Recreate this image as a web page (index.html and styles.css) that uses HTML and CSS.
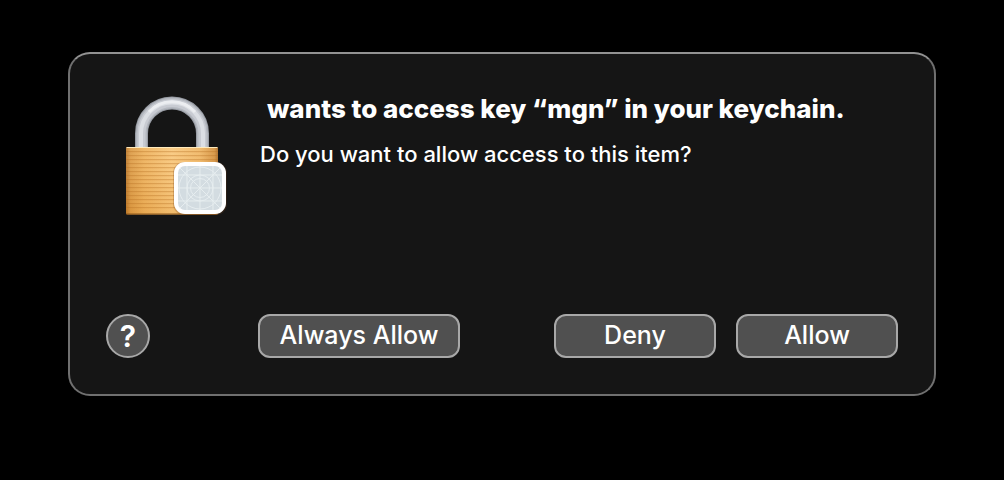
FILE: index.html
```html
<!DOCTYPE html>
<html lang="en">
<head>
<meta charset="utf-8">
<meta name="viewport" content="width=device-width, initial-scale=1">
<title>Keychain Access</title>
<link rel="stylesheet" href="styles.css">
</head>
<body>
<main class="dialog" role="alertdialog" aria-labelledby="title" aria-describedby="question">
  <div class="message">
    <svg class="lock" viewBox="124 90 104 130" aria-hidden="true">
      <defs>
        <linearGradient id="brass" x1="0" x2="1" y1="0" y2="0">
          <stop offset="0" stop-color="#b9772b"/>
          <stop offset=".05" stop-color="#dc9b45"/>
          <stop offset=".2" stop-color="#eeb25c"/>
          <stop offset=".5" stop-color="#f9c87c"/>
          <stop offset=".8" stop-color="#f0b765"/>
          <stop offset=".96" stop-color="#d5923e"/>
          <stop offset="1" stop-color="#ab6b24"/>
        </linearGradient>
        <linearGradient id="shade" x1="0" x2="0" y1="0" y2="1">
          <stop offset="0" stop-color="#fff" stop-opacity=".08"/>
          <stop offset="1" stop-color="#c87818" stop-opacity=".16"/>
        </linearGradient>
        <pattern id="ridges" width="8" height="4" patternUnits="userSpaceOnUse" y="151">
          <rect width="8" height="1" fill="#b87020" opacity=".36"/>
          <rect y="1" width="8" height="1" fill="#d08830" opacity=".12"/>
        </pattern>
        <clipPath id="tile"><rect x="178" y="166" width="44" height="44" rx="6"/></clipPath>
      </defs>
      <g fill="none">
        <path d="M141.500 148V133.500a30.500 30.500 0 0 1 61 0V148" stroke="#989ca4" stroke-width="13"/>
        <path d="M141.500 148V133.500a30.500 30.500 0 0 1 61 0V148" stroke="#b4b8bf" stroke-width="11"/>
        <path d="M141.500 148V133.500a30.500 30.500 0 0 1 61 0V148" stroke="#c8cbd2" stroke-width="8"/>
        <path d="M141 148V133.500a31 31 0 0 1 62 0V148" stroke="#dcdfe4" stroke-width="4"/>
        <path d="M149 112a31 31 0 0 1 46 0" stroke="#eceef1" stroke-width="3"/>
      </g>
      <rect x="126" y="147" width="92" height="67.500" rx="1.500" fill="url(#brass)"/>
      <rect x="126" y="147" width="92" height="67.500" rx="1.500" fill="url(#shade)"/>
      <rect x="126" y="151" width="92" height="60" fill="url(#ridges)"/>
      <path d="M126.500 147.500h91" stroke="#ffebbd"/>
      <path d="M126.500 214h91" stroke="#8d561b"/>
      <rect x="173" y="162" width="54" height="53" rx="11" fill="#70401a" opacity=".25"/>
      <rect x="174" y="162" width="52" height="52" rx="11" fill="#fff"/>
      <rect x="178" y="166" width="44" height="44" rx="7" fill="#d3dce1"/>
      <g clip-path="url(#tile)" fill="none" stroke="#e8eef1" stroke-width=".9">
        <path d="M178 166l44 44M222 166l-44 44M187 166v44M200 166v44M213 166v44M178 175h44M178 188h44M178 201h44"/>
        <circle cx="200" cy="188" r="21"/>
        <circle cx="200" cy="188" r="13"/>
        <circle cx="200" cy="188" r="9.500"/>
      </g>
    </svg>
    <div class="copy">
      <h1 class="title" id="title">wants to access key “mgn” in your keychain.</h1>
      <p class="question" id="question">Do you want to allow access to this item?</p>
    </div>
  </div>
  <div class="actions">
    <button class="button help" type="button" aria-label="Help">?</button>
    <button class="button always" type="button">Always Allow</button>
    <button class="button choice" type="button">Deny</button>
    <button class="button choice" type="button">Allow</button>
  </div>
</main>
</body>
</html>
```
FILE: styles.css
```css
* {
  box-sizing: border-box;
}

body {
  margin: 0;
  padding: 52px 68px;
  background: #000;
  color: #fff;
  font-family: Inter, "Liberation Sans", sans-serif;
}

.dialog {
  padding: 36px;
  border: 2px solid #707070;
  border-top-color: #929292;
  border-radius: 22px;
  background: #151515;
}

.message {
  display: flex;
  align-items: flex-start;
  gap: 32px;
  min-height: 224px;
  padding-left: 18px;
}

.lock {
  flex: none;
  width: 104px;
  height: 130px;
}

.copy {
  flex: 1;
}

.title {
  margin: 0;
  padding: 3px 0 0 7px;
  font-size: 26px;
  font-weight: 800;
  line-height: 32px;
}

.question {
  margin: 15px 0 0;
  font-size: 22px;
  font-weight: 500;
  line-height: 28px;
}

.actions {
  display: flex;
  gap: 20px;
}

.button {
  height: 44px;
  padding: 0 16px 2px;
  border: 2px solid #a8a8a8;
  border-radius: 12px;
  background: #505050;
  color: #fff;
  font-family: inherit;
  font-size: 25px;
  font-weight: 500;
  line-height: 32px;
}

.help {
  width: 44px;
  margin-right: 88px;
  padding: 0;
  border-radius: 50%;
  font-size: 30px;
  font-weight: 600;
}

.always {
  min-width: 202px;
  margin-right: auto;
}

.choice {
  min-width: 162px;
}
```
